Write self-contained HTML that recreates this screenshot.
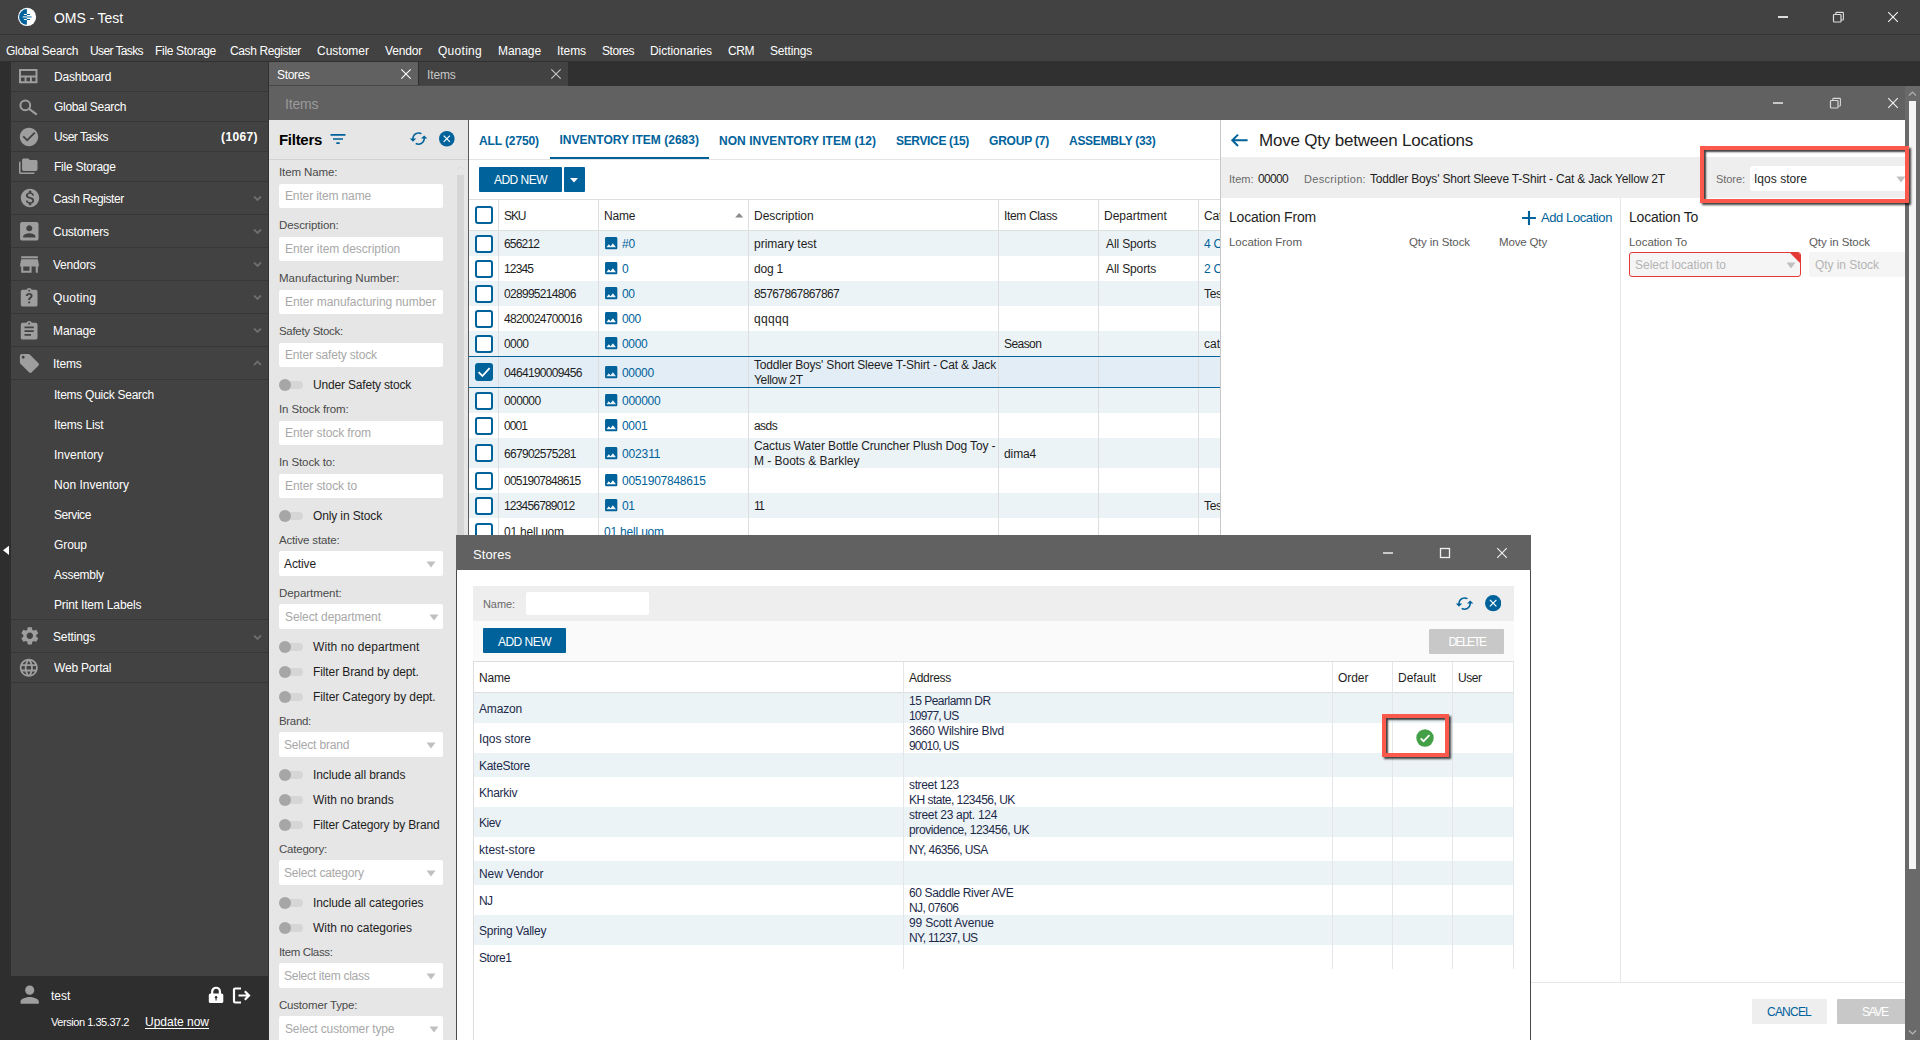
<!DOCTYPE html>
<html><head><meta charset="utf-8"><title>OMS - Test</title>
<style>
html,body{margin:0;padding:0;}
body{width:1920px;height:1040px;overflow:hidden;position:relative;background:#303030;font-family:"Liberation Sans",sans-serif;}
div,span,svg{position:absolute;box-sizing:border-box;}
span{white-space:nowrap;line-height:16px;}
.clip{overflow:hidden;}
</style></head><body>
<div style="left:0px;top:0px;width:1920px;height:34px;background:#424242;"></div>
<div style="left:0px;top:34px;width:1920px;height:1px;background:#333333;"></div>
<div style="left:0px;top:35px;width:1920px;height:26px;background:#424242;"></div>
<svg style="left:17px;top:7px;" width="20" height="20" viewBox="0 0 20 20"><circle cx="10.05" cy="9.95" r="9.1" fill="#fff"/><path d="M9.9 2.1a7.85 7.85 0 0 0 0 15.7z" fill="#00629b"/><path d="M6.9 7.5h3M6.9 12.5h3" stroke="#fff" stroke-width="1"/><path d="M9.9 7.5h3.1M9.9 12.5h3.1" stroke="#00629b" stroke-width="1"/><path d="M5.7 9.95h4.2" stroke="#c9dde9" stroke-width="1.4"/><path d="M9.9 9.95h4.7" stroke="#4f93bb" stroke-width="1.4"/></svg>
<span style="left:54.00px;top:10.45px;font-size:14px;color:#ffffff;letter-spacing:-0.076px;">OMS - Test</span>
<div style="left:1777.5px;top:16.3px;width:10px;height:1.7px;background:#dcdcdc;"></div>
<svg style="left:1831.5px;top:11px;" width="12" height="12" viewBox="0 0 12 12"><rect x="1.5" y="3.5" width="7.5" height="7.5" fill="none" stroke="#dcdcdc" stroke-width="1.2" rx="0.8"/><path d="M3.8 3.2V2.2c0-.5.3-.8.8-.8h6c.5 0 .8.3.8.8v6c0 .5-.3.8-.8.8H9.3" fill="none" stroke="#dcdcdc" stroke-width="1.1"/></svg>
<svg style="left:1886.5px;top:11px;" width="12" height="12" viewBox="0 0 12 12"><path d="M1.2 1.2l9.6 9.6M10.8 1.2l-9.6 9.6" stroke="#f0f0f0" stroke-width="1.15" fill="none"/></svg>
<span style="left:6.00px;top:42.81px;font-size:12px;color:#ffffff;letter-spacing:-0.312px;">Global Search</span>
<span style="left:90.00px;top:42.81px;font-size:12px;color:#ffffff;letter-spacing:-0.614px;">User Tasks</span>
<span style="left:155.00px;top:42.81px;font-size:12px;color:#ffffff;letter-spacing:-0.310px;">File Storage</span>
<span style="left:230.00px;top:42.81px;font-size:12px;color:#ffffff;letter-spacing:-0.389px;">Cash Register</span>
<span style="left:317.00px;top:42.81px;font-size:12px;color:#ffffff;">Customer</span>
<span style="left:385.00px;top:42.81px;font-size:12px;color:#ffffff;letter-spacing:-0.174px;">Vendor</span>
<span style="left:438.00px;top:42.81px;font-size:12px;color:#ffffff;letter-spacing:0.280px;">Quoting</span>
<span style="left:498.00px;top:42.81px;font-size:12px;color:#ffffff;letter-spacing:-0.062px;">Manage</span>
<span style="left:557.00px;top:42.81px;font-size:12px;color:#ffffff;letter-spacing:-0.069px;">Items</span>
<span style="left:602.00px;top:42.81px;font-size:12px;color:#ffffff;letter-spacing:-0.448px;">Stores</span>
<span style="left:650.00px;top:42.81px;font-size:12px;color:#ffffff;letter-spacing:-0.059px;">Dictionaries</span>
<span style="left:728.00px;top:42.81px;font-size:12px;color:#ffffff;letter-spacing:-0.444px;">CRM</span>
<span style="left:770.00px;top:42.81px;font-size:12px;color:#ffffff;letter-spacing:-0.171px;">Settings</span>
<div style="left:0px;top:62px;width:11px;height:978px;background:#2e2e2e;"></div>
<div style="left:11px;top:62px;width:257px;height:914px;background:#424242;"></div>
<div style="left:11px;top:976px;width:257px;height:64px;background:#2e2e2e;"></div>
<svg style="left:2.6px;top:544.8px;" width="6" height="10.6" viewBox="0 0 6.5 10"><path d="M6.5 0L0 5l6.5 5z" fill="#ffffff"/></svg>
<svg style="left:19.2px;top:69.4px;" width="18.5" height="14.2" viewBox="0 0 18.5 14.2"><path fill="#9e9e9e" fill-rule="evenodd" d="M0 0h18.5v14.2H0zM2 2v4.6h14.5V2zM2 8.5v3.8h3.6V8.5zm5.5 0v3.8h3.5V8.5zm5.4 0v3.8h3.6V8.5z"/></svg>
<svg style="left:18px;top:97px;" width="22" height="20" viewBox="0 0 22 20"><circle cx="7.3" cy="8.3" r="4.9" fill="none" stroke="#9e9e9e" stroke-width="2"/><path d="M10.8 11.6l8 6" stroke="#9e9e9e" stroke-width="2.1" fill="none"/></svg>
<span style="left:54.00px;top:69.31px;font-size:12px;color:#ffffff;letter-spacing:-0.166px;">Dashboard</span>
<div style="left:11px;top:91px;width:257px;height:1px;background:#373737;"></div>
<span style="left:54.00px;top:99.31px;font-size:12px;color:#ffffff;letter-spacing:-0.309px;">Global Search</span>
<div style="left:11px;top:121px;width:257px;height:1px;background:#373737;"></div>
<svg style="left:17.6px;top:125.5px;" width="22" height="22" viewBox="0 0 24 24"><path fill="#9e9e9e" d="M12 2C6.48 2 2 6.48 2 12s4.48 10 10 10 10-4.48 10-10S17.52 2 12 2zm-2 15l-5-5 1.41-1.41L10 14.17l7.59-7.59L19 8l-9 9z"/></svg>
<span style="left:54.00px;top:129.31px;font-size:12px;color:#ffffff;letter-spacing:-0.505px;">User Tasks</span>
<div style="left:11px;top:151px;width:257px;height:1px;background:#373737;"></div>
<svg style="left:19.2px;top:157.15px;" width="18.5" height="18.5" viewBox="0 0 24 24"><path fill="#9e9e9e" d="M2 6H0v14c0 1.1.9 2 2 2h18v-2H2V6zm20-2h-8l-2-2H6c-1.1 0-2 .9-2 2v12c0 1.1.9 2 2 2h16c1.1 0 2-.9 2-2V6c0-1.1-.9-2-2-2z"/></svg>
<span style="left:54.00px;top:159.31px;font-size:12px;color:#ffffff;letter-spacing:-0.253px;">File Storage</span>
<div style="left:11px;top:181px;width:257px;height:1px;background:#373737;"></div>
<svg style="left:18.5px;top:187.0px;" width="22" height="22" viewBox="0 0 24 24"><path fill="#9e9e9e" d="M12 2C6.48 2 2 6.48 2 12s4.48 10 10 10 10-4.48 10-10S17.52 2 12 2zm1.41 16.09V20h-2.67v-1.93c-1.71-.36-3.16-1.46-3.27-3.4h1.96c.1 1.05.82 1.87 2.65 1.87 1.96 0 2.4-.98 2.4-1.59 0-.83-.44-1.61-2.67-2.14-2.48-.6-4.18-1.62-4.18-3.67 0-1.72 1.39-2.84 3.11-3.21V4h2.67v1.95c1.86.45 2.79 1.86 2.85 3.39H14.3c-.05-1.11-.64-1.87-2.22-1.87-1.5 0-2.4.68-2.4 1.64 0 .84.65 1.39 2.67 1.91s4.18 1.39 4.18 3.91c-.01 1.83-1.38 2.83-3.12 3.16z"/></svg>
<span style="left:53.00px;top:190.81px;font-size:12px;color:#ffffff;letter-spacing:-0.391px;">Cash Register</span>
<div style="left:11px;top:214px;width:257px;height:1px;background:#373737;"></div>
<svg style="left:253px;top:195.0px;" width="9" height="7" viewBox="0 0 9 7"><path d="M1 1.5L4.5 5 8 1.5" stroke="#6e6e6e" stroke-width="1.8" fill="none"/></svg>
<svg style="left:17.3px;top:218.7px;" width="24.6" height="24.6" viewBox="0 0 24 24"><path fill="#9e9e9e" d="M3 5v14c0 1.1.89 2 2 2h14c1.1 0 2-.9 2-2V5c0-1.1-.9-2-2-2H5c-1.11 0-2 .9-2 2zm12 4c0 1.66-1.34 3-3 3s-3-1.34-3-3 1.34-3 3-3 3 1.34 3 3zm-9 8c0-2 4-3.1 6-3.1s6 1.1 6 3.1v1H6v-1z"/></svg>
<span style="left:53.00px;top:223.81px;font-size:12px;color:#ffffff;letter-spacing:-0.260px;">Customers</span>
<div style="left:11px;top:247px;width:257px;height:1px;background:#373737;"></div>
<svg style="left:253px;top:228.0px;" width="9" height="7" viewBox="0 0 9 7"><path d="M1 1.5L4.5 5 8 1.5" stroke="#6e6e6e" stroke-width="1.8" fill="none"/></svg>
<svg style="left:17.1px;top:251.5px;" width="25" height="25" viewBox="0 0 24 24"><path fill="#9e9e9e" d="M20 4H4v2h16V4zm1 10v-2l-1-5H4l-1 5v2h1v6h10v-6h4v6h2v-6h1zm-9 4H6v-4h6v4z"/></svg>
<span style="left:53.00px;top:256.81px;font-size:12px;color:#ffffff;letter-spacing:-0.222px;">Vendors</span>
<div style="left:11px;top:280px;width:257px;height:1px;background:#373737;"></div>
<svg style="left:253px;top:261.0px;" width="9" height="7" viewBox="0 0 9 7"><path d="M1 1.5L4.5 5 8 1.5" stroke="#6e6e6e" stroke-width="1.8" fill="none"/></svg>
<svg style="left:18.35px;top:286.78px;" width="22.3" height="22.3" viewBox="0 0 24 24"><path fill="#9e9e9e" d="M19 3h-4.18C14.4 1.84 13.3 1 12 1c-1.3 0-2.4.84-2.82 2H5c-1.1 0-2 .9-2 2v14c0 1.1.9 2 2 2h14c1.1 0 2-.9 2-2V5c0-1.1-.9-2-2-2zm-7 0c.55 0 1 .45 1 1s-.45 1-1 1-1-.45-1-1 .45-1 1-1zm1.1 14.6h-2.2v-2.1h2.2v2.1zm1.9-6.2c-.7.7-1.7 1.2-1.8 2.7h-2.3c0-1.9.8-2.7 1.6-3.3.6-.5 1-.8 1-1.400 0-.6-.5-1.1-1.300-1.100-.8 0-1.400.5-1.500 1.300H8.400c.1-2 1.600-3.200 3.700-3.200 2.200 0 3.600 1.200 3.600 2.900 0 1-.3 1.500-.7 2.100z"/></svg>
<span style="left:53.00px;top:289.81px;font-size:12px;color:#ffffff;letter-spacing:0.169px;">Quoting</span>
<div style="left:11px;top:313px;width:257px;height:1px;background:#373737;"></div>
<svg style="left:253px;top:294.0px;" width="9" height="7" viewBox="0 0 9 7"><path d="M1 1.5L4.5 5 8 1.5" stroke="#6e6e6e" stroke-width="1.8" fill="none"/></svg>
<svg style="left:18.35px;top:319.98px;" width="22.3" height="22.3" viewBox="0 0 24 24"><path fill="#9e9e9e" d="M19 3h-4.18C14.4 1.84 13.3 1 12 1c-1.3 0-2.4.84-2.82 2H5c-1.1 0-2 .9-2 2v14c0 1.1.9 2 2 2h14c1.1 0 2-.9 2-2V5c0-1.1-.9-2-2-2zm-7 0c.55 0 1 .45 1 1s-.45 1-1 1-1-.45-1-1 .45-1 1-1zm2 14H7v-2h7v2zm3-4H7v-2h10v2zm0-4H7V7h10v2z"/></svg>
<span style="left:53.00px;top:322.81px;font-size:12px;color:#ffffff;letter-spacing:-0.120px;">Manage</span>
<div style="left:11px;top:346px;width:257px;height:1px;background:#373737;"></div>
<svg style="left:253px;top:327.0px;" width="9" height="7" viewBox="0 0 9 7"><path d="M1 1.5L4.5 5 8 1.5" stroke="#6e6e6e" stroke-width="1.8" fill="none"/></svg>
<svg style="left:18.2px;top:351.6px;" width="22.8" height="22.8" viewBox="0 0 24 24"><path fill="#9e9e9e" d="M21.41 11.58l-9-9C12.05 2.22 11.55 2 11 2H4c-1.1 0-2 .9-2 2v7c0 .55.22 1.05.59 1.42l9 9c.36.36.86.58 1.41.58.55 0 1.05-.22 1.41-.59l7-7c.37-.36.59-.86.59-1.41 0-.55-.23-1.06-.59-1.42zM5.5 7C4.67 7 4 6.33 4 5.5S4.67 4 5.5 4 7 4.67 7 5.5 6.33 7 5.5 7z"/></svg>
<span style="left:53.00px;top:355.81px;font-size:12px;color:#ffffff;letter-spacing:-0.139px;">Items</span>
<div style="left:11px;top:379px;width:257px;height:1px;background:#373737;"></div>
<svg style="left:253px;top:360.0px;" width="9" height="7" viewBox="0 0 9 7"><path d="M1 5l3.5-3.5L8 5" stroke="#6e6e6e" stroke-width="1.8" fill="none"/></svg>
<span style="left:221.00px;top:129.31px;font-size:12px;color:#ffffff;font-weight:bold;letter-spacing:0.384px;">(1067)</span>
<span style="left:54.00px;top:387.31px;font-size:12px;color:#ffffff;letter-spacing:-0.264px;">Items Quick Search</span>
<span style="left:54.00px;top:417.31px;font-size:12px;color:#ffffff;letter-spacing:-0.193px;">Items List</span>
<span style="left:54.00px;top:447.31px;font-size:12px;color:#ffffff;letter-spacing:-0.005px;">Inventory</span>
<span style="left:54.00px;top:477.31px;font-size:12px;color:#ffffff;letter-spacing:0.032px;">Non Inventory</span>
<span style="left:54.00px;top:507.31px;font-size:12px;color:#ffffff;letter-spacing:-0.444px;">Service</span>
<span style="left:54.00px;top:537.31px;font-size:12px;color:#ffffff;letter-spacing:-0.085px;">Group</span>
<span style="left:54.00px;top:567.31px;font-size:12px;color:#ffffff;letter-spacing:-0.284px;">Assembly</span>
<span style="left:54.00px;top:597.31px;font-size:12px;color:#ffffff;letter-spacing:-0.165px;">Print Item Labels</span>
<div style="left:11px;top:619px;width:257px;height:1px;background:#373737;"></div>
<svg style="left:18.7px;top:625.1px;" width="21.6" height="21.6" viewBox="0 0 24 24"><path fill="#9e9e9e" d="M19.14 12.94c.04-.3.06-.61.06-.94 0-.32-.02-.64-.07-.94l2.03-1.58c.18-.14.23-.41.12-.61l-1.92-3.32c-.12-.22-.37-.29-.59-.22l-2.39.96c-.5-.38-1.03-.7-1.62-.94l-.36-2.54c-.04-.24-.24-.41-.48-.41h-3.84c-.24 0-.43.17-.47.41l-.36 2.54c-.59.24-1.13.57-1.62.94l-2.39-.96c-.22-.08-.47 0-.59.22L2.74 8.87c-.12.21-.08.47.12.61l2.03 1.58c-.05.3-.09.63-.09.94s.02.64.07.94l-2.03 1.58c-.18.14-.23.41-.12.61l1.92 3.32c.12.22.37.29.59.22l2.39-.96c.5.38 1.03.7 1.62.94l.36 2.54c.05.24.24.41.48.41h3.84c.24 0 .44-.17.47-.41l.36-2.54c.59-.24 1.13-.56 1.62-.94l2.39.96c.22.08.47 0 .59-.22l1.92-3.32c.12-.22.07-.47-.12-.61l-2.01-1.58zM12 15.6c-1.98 0-3.6-1.62-3.6-3.6s1.62-3.6 3.6-3.6 3.6 1.62 3.6 3.6-1.62 3.6-3.6 3.6z"/></svg>
<span style="left:53.00px;top:629.31px;font-size:12px;color:#ffffff;letter-spacing:-0.150px;">Settings</span>
<svg style="left:253px;top:633.5px;" width="9" height="7" viewBox="0 0 9 7"><path d="M1 1.5L4.5 5 8 1.5" stroke="#6e6e6e" stroke-width="1.8" fill="none"/></svg>
<div style="left:11px;top:652px;width:257px;height:1px;background:#373737;"></div>
<svg style="left:17.8px;top:656.8px;" width="21.6" height="21.6" viewBox="0 0 24 24"><path fill="#9e9e9e" d="M11.99 2C6.47 2 2 6.48 2 12s4.47 10 9.99 10C17.52 22 22 17.52 22 12S17.52 2 11.99 2zm6.93 6h-2.95c-.32-1.25-.78-2.45-1.38-3.56 1.84.63 3.37 1.91 4.33 3.56zM12 4.04c.83 1.2 1.48 2.53 1.91 3.96h-3.82c.43-1.43 1.08-2.76 1.91-3.96zM4.26 14C4.1 13.36 4 12.69 4 12s.1-1.36.26-2h3.38c-.08.66-.14 1.32-.14 2 0 .68.06 1.34.14 2H4.26zm.82 2h2.95c.32 1.25.78 2.45 1.38 3.56-1.84-.63-3.37-1.9-4.33-3.56zm2.95-8H5.08c.96-1.66 2.49-2.93 4.33-3.56C8.81 5.55 8.35 6.75 8.03 8zM12 19.96c-.83-1.2-1.48-2.53-1.91-3.96h3.82c-.43 1.43-1.08 2.76-1.91 3.96zM14.34 14H9.66c-.09-.66-.16-1.32-.16-2 0-.68.07-1.35.16-2h4.68c.09.65.16 1.32.16 2 0 .68-.07 1.34-.16 2zm.25 5.56c.6-1.11 1.06-2.31 1.38-3.56h2.95c-.96 1.65-2.49 2.93-4.33 3.56zM16.36 14c.08-.66.14-1.32.14-2 0-.68-.06-1.34-.14-2h3.38c.16.64.26 1.31.26 2s-.1 1.36-.26 2h-3.38z"/></svg>
<span style="left:54.00px;top:660.31px;font-size:12px;color:#ffffff;letter-spacing:-0.185px;">Web Portal</span>
<div style="left:11px;top:682px;width:257px;height:1px;background:#373737;"></div>
<svg style="left:16.3px;top:981.3px;" width="27.4" height="27.4" viewBox="0 0 24 24"><path fill="#9e9e9e" d="M12 12c2.21 0 4-1.79 4-4s-1.79-4-4-4-4 1.79-4 4 1.79 4 4 4zm0 2c-2.67 0-8 1.34-8 4v2h16v-2c0-2.66-5.33-4-8-4z"/></svg>
<span style="left:51.00px;top:988.31px;font-size:12px;color:#ffffff;letter-spacing:-0.012px;">test</span>
<svg style="left:208px;top:986px;" width="16" height="18" viewBox="0 0 16 18"><rect x="0.8" y="7.4" width="14.5" height="9.6" rx="1.6" fill="#fff"/><path d="M4.2 8V5.6a3.85 3.85 0 0 1 7.7 0V8" fill="none" stroke="#fff" stroke-width="2.2"/><circle cx="8.05" cy="11.3" r="1.2" fill="#2e2e2e"/><path d="M8.05 11.5v3" stroke="#2e2e2e" stroke-width="1.1"/></svg>
<svg style="left:232px;top:987px;" width="19" height="17" viewBox="0 0 19 17"><path d="M9 1.5H3.2c-.7 0-1.2.5-1.2 1.2v11.6c0 .7.5 1.2 1.2 1.2H9" fill="none" stroke="#fff" stroke-width="2.2"/><path d="M6.5 8.5h10M12.8 4.3l4.2 4.2-4.2 4.2" fill="none" stroke="#fff" stroke-width="2.2"/></svg>
<span style="left:51.00px;top:1014.24px;font-size:11px;color:#ffffff;letter-spacing:-0.448px;">Version 1.35.37.2</span>
<span style="left:145.00px;top:1014.11px;font-size:12px;color:#ffffff;letter-spacing:-0.006px;">Update now</span>
<div style="left:145px;top:1028px;width:64px;height:1px;background:#ffffff;"></div>
<div style="left:269px;top:62px;width:149px;height:24px;background:#616161;"></div>
<span style="left:277.00px;top:66.81px;font-size:12px;color:#ffffff;letter-spacing:-0.335px;">Stores</span>
<div style="left:419px;top:62px;width:149px;height:24px;background:#424242;"></div>
<span style="left:427.00px;top:66.81px;font-size:12px;color:#c8c8c8;letter-spacing:-0.139px;">Items</span>
<svg style="left:399.5px;top:68px;" width="12" height="12" viewBox="0 0 12 12"><path d="M1.3 1.3l9.4 9.4M10.7 1.3l-9.4 9.4" stroke="#ffffff" stroke-width="1.1" fill="none"/></svg>
<svg style="left:550px;top:68px;" width="12" height="12" viewBox="0 0 12 12"><path d="M1.3 1.3l9.4 9.4M10.7 1.3l-9.4 9.4" stroke="#c8c8c8" stroke-width="1.1" fill="none"/></svg>
<div style="left:269px;top:85px;width:299px;height:1px;background:#464646;"></div>
<div style="left:269px;top:86px;width:1636px;height:34px;background:#616161;"></div>
<span style="left:285.00px;top:96.44px;font-size:14px;color:#9a9a9a;letter-spacing:-0.161px;">Items</span>
<div style="left:1773px;top:102.3px;width:10px;height:1.7px;background:#c8c8c8;"></div>
<svg style="left:1829px;top:97px;" width="12" height="12" viewBox="0 0 12 12"><rect x="1.5" y="3.5" width="7.5" height="7.5" fill="none" stroke="#d8d8d8" stroke-width="1.2" rx="0.8"/><path d="M3.8 3.2V2.2c0-.5.3-.8.8-.8h6c.5 0 .8.3.8.8v6c0 .5-.3.8-.8.8H9.3" fill="none" stroke="#d8d8d8" stroke-width="1.1"/></svg>
<svg style="left:1886.5px;top:97px;" width="12" height="12" viewBox="0 0 12 12"><path d="M1.2 1.2l9.6 9.6M10.8 1.2l-9.6 9.6" stroke="#f0f0f0" stroke-width="1.15" fill="none"/></svg>
<div style="left:269px;top:120px;width:1636px;height:920px;background:#ffffff;"></div>
<div style="left:1905px;top:86px;width:15px;height:954px;background:#6a6a6a;"></div>
<div style="left:1909px;top:101px;width:7px;height:766px;background:#f5f5f5;"></div>
<svg style="left:1908px;top:90px;" width="9" height="7" viewBox="0 0 9 7"><path d="M1 5.5L4.5 2 8 5.5" stroke="#b0b0b0" stroke-width="1.2" fill="none"/></svg>
<svg style="left:1908px;top:1029px;" width="9" height="7" viewBox="0 0 9 7"><path d="M1 1.5L4.5 5 8 1.5" stroke="#9a9a9a" stroke-width="1.2" fill="none"/></svg>
<div style="left:269px;top:120px;width:199px;height:920px;background:#e6e6e6;"></div>
<div style="left:468px;top:120px;width:1px;height:920px;background:#5a5a5a;"></div>
<span style="left:279.00px;top:132.01px;font-size:15px;color:#000000;font-weight:bold;letter-spacing:-0.289px;">Filters</span>
<svg style="left:328px;top:129px;" width="20" height="20" viewBox="0 0 24 24"><path fill="#00629b" d="M10 18h4v-2h-4v2zM3 6v2h18V6H3zm3 7h12v-2H6v2z"/></svg>
<svg style="left:409.4px;top:129.2px;" width="19.2" height="19.2" viewBox="0 0 24 24"><path fill="#00629b" d="M19 8l-4 4h3c0 3.31-2.69 6-6 6-1.01 0-1.97-.25-2.8-.7l-1.46 1.46C8.97 19.54 10.43 20 12 20c4.42 0 8-3.58 8-8h3l-4-4zM6 12c0-3.31 2.69-6 6-6 1.01 0 1.97.25 2.8.7l1.46-1.46C15.03 4.46 13.57 4 12 4c-4.42 0-8 3.58-8 8H1l4 4 4-4H6z"/></svg>
<svg style="left:439.2px;top:131.2px;" width="15.6" height="15.6" viewBox="0 0 20 20"><circle cx="10" cy="10" r="10" fill="#00629b"/><path d="M6 6l8 8M14 6l-8 8" stroke="#fff" stroke-width="1.5" fill="none"/></svg>
<div style="left:269px;top:159px;width:199px;height:1px;background:#d2d2d2;"></div>
<svg style="left:456px;top:165px;" width="9" height="6" viewBox="0 0 9 6"><path d="M1 5L4.5 1.5 8 5" stroke="#dadada" stroke-width="1" fill="none"/></svg>
<div style="left:457px;top:175px;width:7px;height:865px;background:#d5d5d5;"></div>
<span style="left:279.00px;top:163.78px;font-size:11.5px;color:#4a4a4a;letter-spacing:-0.116px;">Item Name:</span>
<div style="left:279px;top:184.0px;width:164px;height:23.5px;background:#ffffff;border-radius:2px;"></div>
<span style="left:285.00px;top:188.31px;font-size:12px;color:#a8a8a8;letter-spacing:-0.131px;">Enter item name</span>
<span style="left:279.00px;top:216.78px;font-size:11.5px;color:#4a4a4a;letter-spacing:-0.091px;">Description:</span>
<div style="left:279px;top:237.0px;width:164px;height:23.5px;background:#ffffff;border-radius:2px;"></div>
<span style="left:285.00px;top:241.31px;font-size:12px;color:#a8a8a8;letter-spacing:-0.040px;">Enter item description</span>
<span style="left:279.00px;top:269.78px;font-size:11.5px;color:#4a4a4a;letter-spacing:0.017px;">Manufacturing Number:</span>
<div style="left:279px;top:290.0px;width:164px;height:23.5px;background:#ffffff;border-radius:2px;"></div>
<span style="left:285.00px;top:294.31px;font-size:12px;color:#a8a8a8;letter-spacing:-0.048px;">Enter manufacturing number</span>
<span style="left:279.00px;top:322.78px;font-size:11.5px;color:#4a4a4a;letter-spacing:-0.306px;">Safety Stock:</span>
<div style="left:279px;top:343.0px;width:164px;height:23.5px;background:#ffffff;border-radius:2px;"></div>
<span style="left:285.00px;top:347.31px;font-size:12px;color:#a8a8a8;letter-spacing:-0.201px;">Enter safety stock</span>
<div style="left:281px;top:380.5px;width:22px;height:8px;background:#d6d6d6;border-radius:4px;"></div>
<div style="left:279px;top:378.5px;width:12px;height:12px;background:#a6a6a6;border-radius:6px;"></div>
<span style="left:313.00px;top:377.31px;font-size:12px;color:#1e1e1e;letter-spacing:-0.180px;">Under Safety stock</span>
<span style="left:279.00px;top:400.78px;font-size:11.5px;color:#4a4a4a;letter-spacing:-0.092px;">In Stock from:</span>
<div style="left:279px;top:421.0px;width:164px;height:23.5px;background:#ffffff;border-radius:2px;"></div>
<span style="left:285.00px;top:425.31px;font-size:12px;color:#a8a8a8;letter-spacing:-0.084px;">Enter stock from</span>
<span style="left:279.00px;top:453.78px;font-size:11.5px;color:#4a4a4a;letter-spacing:-0.111px;">In Stock to:</span>
<div style="left:279px;top:474.0px;width:164px;height:23.5px;background:#ffffff;border-radius:2px;"></div>
<span style="left:285.00px;top:478.31px;font-size:12px;color:#a8a8a8;letter-spacing:-0.098px;">Enter stock to</span>
<div style="left:281px;top:511.5px;width:22px;height:8px;background:#d6d6d6;border-radius:4px;"></div>
<div style="left:279px;top:509.5px;width:12px;height:12px;background:#a6a6a6;border-radius:6px;"></div>
<span style="left:313.00px;top:508.31px;font-size:12px;color:#1e1e1e;letter-spacing:-0.128px;">Only in Stock</span>
<span style="left:279.00px;top:531.78px;font-size:11.5px;color:#4a4a4a;letter-spacing:-0.164px;">Active state:</span>
<div style="left:279px;top:551.0px;width:164px;height:25px;background:#ffffff;border-radius:2px;"></div>
<span style="left:284.00px;top:556.31px;font-size:12px;color:#1e1e1e;letter-spacing:-0.121px;">Active</span>
<svg style="left:425.5px;top:561.0px;" width="10" height="7" viewBox="0 0 10 7"><path d="M0.5 0.5h9L5 6.5z" fill="#c0c0c0"/></svg>
<span style="left:279.00px;top:584.78px;font-size:11.5px;color:#4a4a4a;letter-spacing:-0.049px;">Department:</span>
<div style="left:279px;top:604.0px;width:164px;height:25px;background:#ffffff;border-radius:2px;"></div>
<span style="left:285.00px;top:609.31px;font-size:12px;color:#a8a8a8;letter-spacing:-0.088px;">Select department</span>
<svg style="left:428.5px;top:614.0px;" width="10" height="7" viewBox="0 0 10 7"><path d="M0.5 0.5h9L5 6.5z" fill="#c0c0c0"/></svg>
<div style="left:281px;top:642.5px;width:22px;height:8px;background:#d6d6d6;border-radius:4px;"></div>
<div style="left:279px;top:640.5px;width:12px;height:12px;background:#a6a6a6;border-radius:6px;"></div>
<span style="left:313.00px;top:639.31px;font-size:12px;color:#1e1e1e;letter-spacing:0.094px;">With no department</span>
<div style="left:281px;top:667.5px;width:22px;height:8px;background:#d6d6d6;border-radius:4px;"></div>
<div style="left:279px;top:665.5px;width:12px;height:12px;background:#a6a6a6;border-radius:6px;"></div>
<span style="left:313.00px;top:664.31px;font-size:12px;color:#1e1e1e;letter-spacing:-0.107px;">Filter Brand by dept.</span>
<div style="left:281px;top:692.5px;width:22px;height:8px;background:#d6d6d6;border-radius:4px;"></div>
<div style="left:279px;top:690.5px;width:12px;height:12px;background:#a6a6a6;border-radius:6px;"></div>
<span style="left:313.00px;top:689.31px;font-size:12px;color:#1e1e1e;letter-spacing:-0.090px;">Filter Category by dept.</span>
<span style="left:279.00px;top:712.78px;font-size:11.5px;color:#4a4a4a;letter-spacing:-0.338px;">Brand:</span>
<div style="left:279px;top:732.0px;width:164px;height:25px;background:#ffffff;border-radius:2px;"></div>
<span style="left:284.00px;top:737.31px;font-size:12px;color:#a8a8a8;letter-spacing:-0.181px;">Select brand</span>
<svg style="left:425.5px;top:742.0px;" width="10" height="7" viewBox="0 0 10 7"><path d="M0.5 0.5h9L5 6.5z" fill="#c0c0c0"/></svg>
<div style="left:281px;top:770.5px;width:22px;height:8px;background:#d6d6d6;border-radius:4px;"></div>
<div style="left:279px;top:768.5px;width:12px;height:12px;background:#a6a6a6;border-radius:6px;"></div>
<span style="left:313.00px;top:767.31px;font-size:12px;color:#1e1e1e;letter-spacing:-0.098px;">Include all brands</span>
<div style="left:281px;top:795.5px;width:22px;height:8px;background:#d6d6d6;border-radius:4px;"></div>
<div style="left:279px;top:793.5px;width:12px;height:12px;background:#a6a6a6;border-radius:6px;"></div>
<span style="left:313.00px;top:792.31px;font-size:12px;color:#1e1e1e;">With no brands</span>
<div style="left:281px;top:820.5px;width:22px;height:8px;background:#d6d6d6;border-radius:4px;"></div>
<div style="left:279px;top:818.5px;width:12px;height:12px;background:#a6a6a6;border-radius:6px;"></div>
<span style="left:313.00px;top:817.31px;font-size:12px;color:#1e1e1e;letter-spacing:-0.150px;">Filter Category by Brand</span>
<span style="left:279.00px;top:840.78px;font-size:11.5px;color:#4a4a4a;letter-spacing:-0.213px;">Category:</span>
<div style="left:279px;top:860.0px;width:164px;height:25px;background:#ffffff;border-radius:2px;"></div>
<span style="left:284.00px;top:865.31px;font-size:12px;color:#a8a8a8;letter-spacing:-0.185px;">Select category</span>
<svg style="left:425.5px;top:870.0px;" width="10" height="7" viewBox="0 0 10 7"><path d="M0.5 0.5h9L5 6.5z" fill="#c0c0c0"/></svg>
<div style="left:281px;top:898.5px;width:22px;height:8px;background:#d6d6d6;border-radius:4px;"></div>
<div style="left:279px;top:896.5px;width:12px;height:12px;background:#a6a6a6;border-radius:6px;"></div>
<span style="left:313.00px;top:895.31px;font-size:12px;color:#1e1e1e;letter-spacing:-0.107px;">Include all categories</span>
<div style="left:281px;top:923.5px;width:22px;height:8px;background:#d6d6d6;border-radius:4px;"></div>
<div style="left:279px;top:921.5px;width:12px;height:12px;background:#a6a6a6;border-radius:6px;"></div>
<span style="left:313.00px;top:920.31px;font-size:12px;color:#1e1e1e;letter-spacing:-0.029px;">With no categories</span>
<span style="left:279.00px;top:943.78px;font-size:11.5px;color:#4a4a4a;letter-spacing:-0.367px;">Item Class:</span>
<div style="left:279px;top:963.0px;width:164px;height:25px;background:#ffffff;border-radius:2px;"></div>
<span style="left:284.00px;top:968.31px;font-size:12px;color:#a8a8a8;letter-spacing:-0.271px;">Select item class</span>
<svg style="left:425.5px;top:973.0px;" width="10" height="7" viewBox="0 0 10 7"><path d="M0.5 0.5h9L5 6.5z" fill="#c0c0c0"/></svg>
<span style="left:279.00px;top:996.78px;font-size:11.5px;color:#4a4a4a;letter-spacing:-0.195px;">Customer Type:</span>
<div style="left:279px;top:1016.0px;width:164px;height:25px;background:#ffffff;border-radius:2px;"></div>
<span style="left:285.00px;top:1021.31px;font-size:12px;color:#a8a8a8;letter-spacing:-0.136px;">Select customer type</span>
<svg style="left:428.5px;top:1026.0px;" width="10" height="7" viewBox="0 0 10 7"><path d="M0.5 0.5h9L5 6.5z" fill="#c0c0c0"/></svg>
<span style="left:479.00px;top:133.31px;font-size:12px;color:#00629b;font-weight:bold;letter-spacing:-0.115px;">ALL (2750)</span>
<span style="left:559.50px;top:132.31px;font-size:12px;color:#00629b;font-weight:bold;letter-spacing:0.015px;">INVENTORY ITEM (2683)</span>
<span style="left:719.00px;top:133.31px;font-size:12px;color:#00629b;font-weight:bold;letter-spacing:0.051px;">NON INVENTORY ITEM (12)</span>
<span style="left:896.00px;top:133.31px;font-size:12px;color:#00629b;font-weight:bold;letter-spacing:-0.346px;">SERVICE (15)</span>
<span style="left:989.00px;top:133.31px;font-size:12px;color:#00629b;font-weight:bold;letter-spacing:-0.200px;">GROUP (7)</span>
<span style="left:1069.00px;top:133.31px;font-size:12px;color:#00629b;font-weight:bold;letter-spacing:-0.273px;">ASSEMBLY (33)</span>
<div style="left:469px;top:159px;width:751px;height:1px;background:#e4e4e4;"></div>
<div style="left:549.5px;top:157px;width:159.5px;height:2px;background:#00629b;"></div>
<div style="left:479px;top:167px;width:82.5px;height:25px;background:#00629b;border-radius:1px;"></div>
<span style="left:494.00px;top:171.81px;font-size:12px;color:#ffffff;letter-spacing:-0.525px;">ADD NEW</span>
<div style="left:563.5px;top:167px;width:21.5px;height:25px;background:#00629b;border-radius:1px;"></div>
<svg style="left:570px;top:178px;" width="8" height="5" viewBox="0 0 8 5"><path d="M0 0h8L4 4.5z" fill="#fff"/></svg>
<div style="left:469px;top:199px;width:751px;height:1px;background:#dedede;"></div>
<div style="left:469px;top:230px;width:751px;height:1px;background:#dedede;"></div>
<div class="clip" style="left:469px;top:200px;width:751px;height:340px;">
<div style="left:0px;top:31px;width:751px;height:25px;background:#ecf3f7;"></div>
<div style="left:0px;top:81px;width:751px;height:25px;background:#ecf3f7;"></div>
<div style="left:0px;top:131px;width:751px;height:25px;background:#ecf3f7;"></div>
<div style="left:0px;top:156px;width:751px;height:32px;background:#e3edf5;"></div>
<div style="left:0px;top:188px;width:751px;height:25px;background:#ecf3f7;"></div>
<div style="left:0px;top:238px;width:751px;height:30px;background:#ecf3f7;"></div>
<div style="left:0px;top:293px;width:751px;height:25px;background:#ecf3f7;"></div>
<div style="left:29px;top:0px;width:1px;height:340px;background:#dedede;"></div>
<div style="left:129px;top:0px;width:1px;height:340px;background:#dedede;"></div>
<div style="left:279px;top:0px;width:1px;height:340px;background:#dedede;"></div>
<div style="left:529px;top:0px;width:1px;height:340px;background:#dedede;"></div>
<div style="left:629px;top:0px;width:1px;height:340px;background:#dedede;"></div>
<div style="left:729px;top:0px;width:1px;height:340px;background:#dedede;"></div>
<div style="left:0px;top:156px;width:751px;height:1px;background:#00629b;"></div>
<div style="left:0px;top:187px;width:751px;height:1px;background:#00629b;"></div>
</div>
<span style="left:504.00px;top:208.31px;font-size:12px;color:#1e1e1e;letter-spacing:-1.102px;">SKU</span>
<span style="left:604.00px;top:208.31px;font-size:12px;color:#1e1e1e;letter-spacing:-0.164px;">Name</span>
<span style="left:754.00px;top:208.31px;font-size:12px;color:#1e1e1e;letter-spacing:-0.037px;">Description</span>
<span style="left:1004.00px;top:208.31px;font-size:12px;color:#1e1e1e;letter-spacing:-0.348px;">Item Class</span>
<span style="left:1104.00px;top:208.31px;font-size:12px;color:#1e1e1e;letter-spacing:0.017px;">Department</span>
<svg style="left:734.8px;top:212.7px;" width="8.3" height="5" viewBox="0 0 8 5"><path d="M0 4.5h8L4 0z" fill="#8a8a8a"/></svg>
<div style="left:475px;top:206px;width:18px;height:18px;background:#ffffff;border:2px solid #00629b;border-radius:3px;"></div>
<div class="clip" style="left:469px;top:200px;width:751px;height:335px;">
<div style="left:-469px;top:-200px;width:1920px;height:1040px;">
<span style="left:1204.00px;top:208.31px;font-size:12px;color:#1e1e1e;letter-spacing:-0.150px;">Category</span>
<div style="left:475px;top:235px;width:18px;height:18px;background:#ffffff;border:2px solid #00629b;border-radius:3px;"></div>
<span style="left:504.00px;top:236.31px;font-size:12px;color:#1e1e1e;letter-spacing:-0.815px;">656212</span>
<svg style="left:602.85px;top:235.2px;" width="16.4" height="16.4" viewBox="0 0 24 24"><path fill="#00629b" d="M21 19V5c0-1.1-.9-2-2-2H5c-1.1 0-2 .9-2 2v14c0 1.1.9 2 2 2h14c1.1 0 2-.9 2-2zM8.5 13.5l2.5 3.01L14.5 12l4.5 6H5l3.5-4.5z"/></svg>
<span style="left:622.00px;top:236.31px;font-size:12px;color:#00629b;letter-spacing:-0.125px;">#0</span>
<span style="left:754.00px;top:236.31px;font-size:12px;color:#1e1e1e;">primary test</span>
<span style="left:1106.00px;top:236.31px;font-size:12px;color:#1e1e1e;letter-spacing:-0.124px;">All Sports</span>
<span style="left:1204.00px;top:236.31px;font-size:12px;color:#00629b;letter-spacing:-0.193px;">4 Category</span>
<div style="left:475px;top:260px;width:18px;height:18px;background:#ffffff;border:2px solid #00629b;border-radius:3px;"></div>
<span style="left:504.00px;top:261.31px;font-size:12px;color:#1e1e1e;letter-spacing:-0.859px;">12345</span>
<svg style="left:602.85px;top:260.2px;" width="16.4" height="16.4" viewBox="0 0 24 24"><path fill="#00629b" d="M21 19V5c0-1.1-.9-2-2-2H5c-1.1 0-2 .9-2 2v14c0 1.1.9 2 2 2h14c1.1 0 2-.9 2-2zM8.5 13.5l2.5 3.01L14.5 12l4.5 6H5l3.5-4.5z"/></svg>
<span style="left:622.00px;top:261.31px;font-size:12px;color:#00629b;letter-spacing:-0.706px;">0</span>
<span style="left:754.00px;top:261.31px;font-size:12px;color:#1e1e1e;letter-spacing:-0.218px;">dog 1</span>
<span style="left:1106.00px;top:261.31px;font-size:12px;color:#1e1e1e;letter-spacing:-0.124px;">All Sports</span>
<span style="left:1204.00px;top:261.31px;font-size:12px;color:#00629b;letter-spacing:-0.193px;">2 Category</span>
<div style="left:475px;top:285px;width:18px;height:18px;background:#ffffff;border:2px solid #00629b;border-radius:3px;"></div>
<span style="left:504.00px;top:286.31px;font-size:12px;color:#1e1e1e;letter-spacing:-0.704px;">028995214806</span>
<svg style="left:602.85px;top:285.2px;" width="16.4" height="16.4" viewBox="0 0 24 24"><path fill="#00629b" d="M21 19V5c0-1.1-.9-2-2-2H5c-1.1 0-2 .9-2 2v14c0 1.1.9 2 2 2h14c1.1 0 2-.9 2-2zM8.5 13.5l2.5 3.01L14.5 12l4.5 6H5l3.5-4.5z"/></svg>
<span style="left:622.00px;top:286.31px;font-size:12px;color:#00629b;letter-spacing:-0.456px;">00</span>
<span style="left:754.00px;top:286.31px;font-size:12px;color:#1e1e1e;letter-spacing:-0.593px;">85767867867867</span>
<span style="left:1204.00px;top:286.31px;font-size:12px;color:#1e1e1e;letter-spacing:-0.367px;">Test</span>
<div style="left:475px;top:310px;width:18px;height:18px;background:#ffffff;border:2px solid #00629b;border-radius:3px;"></div>
<span style="left:504.00px;top:311.31px;font-size:12px;color:#1e1e1e;letter-spacing:-0.696px;">4820024700016</span>
<svg style="left:602.85px;top:310.2px;" width="16.4" height="16.4" viewBox="0 0 24 24"><path fill="#00629b" d="M21 19V5c0-1.1-.9-2-2-2H5c-1.1 0-2 .9-2 2v14c0 1.1.9 2 2 2h14c1.1 0 2-.9 2-2zM8.5 13.5l2.5 3.01L14.5 12l4.5 6H5l3.5-4.5z"/></svg>
<span style="left:622.00px;top:311.31px;font-size:12px;color:#00629b;letter-spacing:-0.372px;">000</span>
<span style="left:754.00px;top:311.31px;font-size:12px;color:#1e1e1e;letter-spacing:0.308px;">qqqqq</span>
<div style="left:475px;top:335px;width:18px;height:18px;background:#ffffff;border:2px solid #00629b;border-radius:3px;"></div>
<span style="left:504.00px;top:336.31px;font-size:12px;color:#1e1e1e;letter-spacing:-0.593px;">0000</span>
<svg style="left:602.85px;top:335.2px;" width="16.4" height="16.4" viewBox="0 0 24 24"><path fill="#00629b" d="M21 19V5c0-1.1-.9-2-2-2H5c-1.1 0-2 .9-2 2v14c0 1.1.9 2 2 2h14c1.1 0 2-.9 2-2zM8.5 13.5l2.5 3.01L14.5 12l4.5 6H5l3.5-4.5z"/></svg>
<span style="left:622.00px;top:336.31px;font-size:12px;color:#00629b;letter-spacing:-0.331px;">0000</span>
<span style="left:1004.00px;top:336.31px;font-size:12px;color:#1e1e1e;letter-spacing:-0.572px;">Season</span>
<span style="left:1204.00px;top:336.31px;font-size:12px;color:#1e1e1e;letter-spacing:0.059px;">catt</span>
<div style="left:475px;top:363px;width:18px;height:18px;background:#00629b;border-radius:3px;"></div>
<svg style="left:475px;top:363px;" width="18" height="18" viewBox="0 0 18 18"><path d="M3.6 9.2l3.8 3.8 7.2-7.8" stroke="#fff" stroke-width="1.8" fill="none"/></svg>
<span style="left:504.00px;top:364.81px;font-size:12px;color:#1e1e1e;letter-spacing:-0.696px;">0464190009456</span>
<svg style="left:602.85px;top:363.7px;" width="16.4" height="16.4" viewBox="0 0 24 24"><path fill="#00629b" d="M21 19V5c0-1.1-.9-2-2-2H5c-1.1 0-2 .9-2 2v14c0 1.1.9 2 2 2h14c1.1 0 2-.9 2-2zM8.5 13.5l2.5 3.01L14.5 12l4.5 6H5l3.5-4.5z"/></svg>
<span style="left:622.00px;top:364.81px;font-size:12px;color:#00629b;letter-spacing:-0.306px;">00000</span>
<span style="left:754.00px;top:357.31px;font-size:12px;color:#1e1e1e;letter-spacing:-0.189px;">Toddler Boys&#x27; Short Sleeve T-Shirt - Cat &amp; Jack</span>
<span style="left:754.00px;top:372.31px;font-size:12px;color:#1e1e1e;letter-spacing:-0.323px;">Yellow 2T</span>
<div style="left:475px;top:392px;width:18px;height:18px;background:#ffffff;border:2px solid #00629b;border-radius:3px;"></div>
<span style="left:504.00px;top:393.31px;font-size:12px;color:#1e1e1e;letter-spacing:-0.593px;">000000</span>
<svg style="left:602.85px;top:392.2px;" width="16.4" height="16.4" viewBox="0 0 24 24"><path fill="#00629b" d="M21 19V5c0-1.1-.9-2-2-2H5c-1.1 0-2 .9-2 2v14c0 1.1.9 2 2 2h14c1.1 0 2-.9 2-2zM8.5 13.5l2.5 3.01L14.5 12l4.5 6H5l3.5-4.5z"/></svg>
<span style="left:622.00px;top:393.31px;font-size:12px;color:#00629b;letter-spacing:-0.289px;">000000</span>
<div style="left:475px;top:417px;width:18px;height:18px;background:#ffffff;border:2px solid #00629b;border-radius:3px;"></div>
<span style="left:504.00px;top:418.31px;font-size:12px;color:#1e1e1e;letter-spacing:-0.926px;">0001</span>
<svg style="left:602.85px;top:417.2px;" width="16.4" height="16.4" viewBox="0 0 24 24"><path fill="#00629b" d="M21 19V5c0-1.1-.9-2-2-2H5c-1.1 0-2 .9-2 2v14c0 1.1.9 2 2 2h14c1.1 0 2-.9 2-2zM8.5 13.5l2.5 3.01L14.5 12l4.5 6H5l3.5-4.5z"/></svg>
<span style="left:622.00px;top:418.31px;font-size:12px;color:#00629b;letter-spacing:-0.331px;">0001</span>
<span style="left:754.00px;top:418.31px;font-size:12px;color:#1e1e1e;letter-spacing:-0.563px;">asds</span>
<div style="left:475px;top:444px;width:18px;height:18px;background:#ffffff;border:2px solid #00629b;border-radius:3px;"></div>
<span style="left:504.00px;top:445.81px;font-size:12px;color:#1e1e1e;letter-spacing:-0.704px;">667902575281</span>
<svg style="left:602.85px;top:444.7px;" width="16.4" height="16.4" viewBox="0 0 24 24"><path fill="#00629b" d="M21 19V5c0-1.1-.9-2-2-2H5c-1.1 0-2 .9-2 2v14c0 1.1.9 2 2 2h14c1.1 0 2-.9 2-2zM8.5 13.5l2.5 3.01L14.5 12l4.5 6H5l3.5-4.5z"/></svg>
<span style="left:622.00px;top:445.81px;font-size:12px;color:#00629b;letter-spacing:-0.141px;">002311</span>
<span style="left:754.00px;top:438.31px;font-size:12px;color:#1e1e1e;letter-spacing:-0.121px;">Cactus Water Bottle Cruncher Plush Dog Toy -</span>
<span style="left:754.00px;top:453.31px;font-size:12px;color:#1e1e1e;letter-spacing:-0.033px;">M - Boots &amp; Barkley</span>
<span style="left:1004.00px;top:445.81px;font-size:12px;color:#1e1e1e;letter-spacing:-0.098px;">dima4</span>
<div style="left:475px;top:472px;width:18px;height:18px;background:#ffffff;border:2px solid #00629b;border-radius:3px;"></div>
<span style="left:504.00px;top:473.31px;font-size:12px;color:#1e1e1e;letter-spacing:-0.798px;">0051907848615</span>
<svg style="left:602.85px;top:472.2px;" width="16.4" height="16.4" viewBox="0 0 24 24"><path fill="#00629b" d="M21 19V5c0-1.1-.9-2-2-2H5c-1.1 0-2 .9-2 2v14c0 1.1.9 2 2 2h14c1.1 0 2-.9 2-2zM8.5 13.5l2.5 3.01L14.5 12l4.5 6H5l3.5-4.5z"/></svg>
<span style="left:622.00px;top:473.31px;font-size:12px;color:#00629b;letter-spacing:-0.244px;">0051907848615</span>
<div style="left:475px;top:497px;width:18px;height:18px;background:#ffffff;border:2px solid #00629b;border-radius:3px;"></div>
<span style="left:504.00px;top:498.31px;font-size:12px;color:#1e1e1e;letter-spacing:-0.815px;">123456789012</span>
<svg style="left:602.85px;top:497.2px;" width="16.4" height="16.4" viewBox="0 0 24 24"><path fill="#00629b" d="M21 19V5c0-1.1-.9-2-2-2H5c-1.1 0-2 .9-2 2v14c0 1.1.9 2 2 2h14c1.1 0 2-.9 2-2zM8.5 13.5l2.5 3.01L14.5 12l4.5 6H5l3.5-4.5z"/></svg>
<span style="left:622.00px;top:498.31px;font-size:12px;color:#00629b;letter-spacing:-0.456px;">01</span>
<span style="left:754.00px;top:498.31px;font-size:12px;color:#1e1e1e;letter-spacing:-1.478px;">11</span>
<span style="left:1204.00px;top:498.31px;font-size:12px;color:#1e1e1e;letter-spacing:-0.367px;">Test</span>
<div style="left:475px;top:523px;width:18px;height:18px;background:#ffffff;border:2px solid #00629b;border-radius:3px;"></div>
<span style="left:504.00px;top:524.31px;font-size:12px;color:#1e1e1e;letter-spacing:-0.195px;">01 hell uom</span>
<span style="left:604.00px;top:524.31px;font-size:12px;color:#00629b;letter-spacing:-0.195px;">01 hell uom</span>
</div></div>
<div style="left:1220px;top:120px;width:1px;height:920px;background:#c8c8c8;"></div>
<div style="left:1221px;top:120px;width:684px;height:920px;background:#ffffff;"></div>
<svg style="left:1230px;top:132px;" width="20" height="16" viewBox="0 0 20 16"><path d="M17.6 8.3H2.6M8 2.6L2.3 8.3 8 14" fill="none" stroke="#00629b" stroke-width="2"/></svg>
<span style="left:1259.00px;top:132.65px;font-size:17px;color:#1e1e1e;letter-spacing:-0.200px;">Move Qty between Locations</span>
<div style="left:1221px;top:157px;width:684px;height:41px;background:#eeeeee;"></div>
<span style="left:1229.00px;top:170.74px;font-size:11px;color:#6a6a6a;letter-spacing:0.011px;">Item:</span>
<span style="left:1258.00px;top:170.81px;font-size:12px;color:#1e1e1e;letter-spacing:-0.676px;">00000</span>
<span style="left:1304.00px;top:170.74px;font-size:11px;color:#6a6a6a;letter-spacing:0.327px;">Description:</span>
<span style="left:1370.00px;top:170.81px;font-size:12px;color:#1e1e1e;letter-spacing:-0.186px;">Toddler Boys&#x27; Short Sleeve T-Shirt - Cat &amp; Jack Yellow 2T</span>
<span style="left:1716.00px;top:170.74px;font-size:11px;color:#6a6a6a;letter-spacing:-0.057px;">Store:</span>
<div style="left:1750px;top:166px;width:160px;height:25px;background:#ffffff;border-radius:3px;"></div>
<span style="left:1754.00px;top:170.81px;font-size:12px;color:#1e1e1e;letter-spacing:0.029px;">Iqos store</span>
<svg style="left:1896px;top:176px;" width="10" height="7" viewBox="0 0 10 7"><path d="M0.5 0.5h9L5 6.5z" fill="#c0c0c0"/></svg>
<span style="left:1229.00px;top:209.44px;font-size:14px;color:#1e1e1e;letter-spacing:-0.191px;">Location From</span>
<svg style="left:1521px;top:210px;" width="16" height="16" viewBox="0 0 16 16"><path d="M8 1.1v13.8M1.1 8h13.8" fill="none" stroke="#00629b" stroke-width="2.1"/></svg>
<span style="left:1541.00px;top:210.38px;font-size:13px;color:#00629b;letter-spacing:-0.408px;">Add Location</span>
<span style="left:1229.00px;top:233.78px;font-size:11.5px;color:#5a5a5a;letter-spacing:-0.038px;">Location From</span>
<span style="left:1409.00px;top:233.78px;font-size:11.5px;color:#5a5a5a;letter-spacing:-0.083px;">Qty in Stock</span>
<span style="left:1499.00px;top:233.78px;font-size:11.5px;color:#5a5a5a;letter-spacing:-0.150px;">Move Qty</span>
<div style="left:1620px;top:198px;width:1px;height:785px;background:#e6e6e6;"></div>
<div style="left:1221px;top:982px;width:684px;height:1px;background:#e6e6e6;"></div>
<span style="left:1629.00px;top:209.44px;font-size:14px;color:#1e1e1e;letter-spacing:-0.213px;">Location To</span>
<span style="left:1629.00px;top:233.78px;font-size:11.5px;color:#5a5a5a;letter-spacing:-0.055px;">Location To</span>
<span style="left:1809.00px;top:233.78px;font-size:11.5px;color:#5a5a5a;letter-spacing:-0.083px;">Qty in Stock</span>
<div class="clip" style="left:1629px;top:252px;width:172px;height:25px;background:#f5f5f5;border:1px solid #e53935;border-radius:3px;"><div style="right:-7px;top:-7px;width:14px;height:14px;background:#e53935;transform:rotate(45deg);"></div></div>
<span style="left:1635.00px;top:256.81px;font-size:12px;color:#b4b4b4;letter-spacing:-0.023px;">Select location to</span>
<svg style="left:1786px;top:262px;" width="10" height="7" viewBox="0 0 10 7"><path d="M0.5 0.5h9L5 6.5z" fill="#c0c0c0"/></svg>
<div style="left:1809px;top:252px;width:100px;height:25px;background:#f5f5f5;border-radius:3px;"></div>
<span style="left:1815.00px;top:256.81px;font-size:12px;color:#b4b4b4;letter-spacing:-0.059px;">Qty in Stock</span>
<div style="left:1752px;top:999px;width:75px;height:25px;background:#eeeeee;border-radius:1px;"></div>
<span style="left:1767.00px;top:1003.81px;font-size:12px;color:#00629b;letter-spacing:-0.781px;">CANCEL</span>
<div style="left:1837px;top:999px;width:72px;height:25px;background:#c8c8c8;border-radius:1px;"></div>
<span style="left:1862.00px;top:1003.81px;font-size:12px;color:#ffffff;letter-spacing:-1.406px;">SAVE</span>
<div style="left:1905px;top:120px;width:15px;height:920px;background:#6a6a6a;"></div>
<div style="left:1909px;top:101px;width:7px;height:767.5px;background:#f5f5f5;"></div>
<svg style="left:1908px;top:1029px;" width="9" height="7" viewBox="0 0 9 7"><path d="M1 1.5L4.5 5 8 1.5" stroke="#b8b8b8" stroke-width="1.2" fill="none"/></svg>
<div style="left:456px;top:535px;width:1075px;height:505px;background:#ffffff;border:1px solid #4a4a4a;border-top:none;border-bottom:none;"></div>
<div style="left:456px;top:535px;width:1075px;height:35px;background:#616161;"></div>
<span style="left:473.00px;top:546.88px;font-size:13px;color:#ffffff;letter-spacing:0.071px;">Stores</span>
<div style="left:1383px;top:552.3px;width:10px;height:1.7px;background:#c8c8c8;"></div>
<svg style="left:1439px;top:547px;" width="12" height="12" viewBox="0 0 12 12"><rect x="1.5" y="1.5" width="9" height="9" fill="none" stroke="#f0f0f0" stroke-width="1.3"/></svg>
<svg style="left:1496px;top:547px;" width="12" height="12" viewBox="0 0 12 12"><path d="M1.2 1.2l9.6 9.6M10.8 1.2l-9.6 9.6" stroke="#f0f0f0" stroke-width="1.15" fill="none"/></svg>
<div style="left:473px;top:586px;width:1041px;height:35px;background:#eeeeee;"></div>
<span style="left:483.00px;top:595.74px;font-size:11px;color:#6a6a6a;letter-spacing:-0.080px;">Name:</span>
<div style="left:526px;top:592px;width:123px;height:23px;background:#ffffff;border-radius:2px;"></div>
<svg style="left:1455.4px;top:593.9px;" width="19.2" height="19.2" viewBox="0 0 24 24"><path fill="#00629b" d="M19 8l-4 4h3c0 3.31-2.69 6-6 6-1.01 0-1.97-.25-2.8-.7l-1.46 1.46C8.97 19.54 10.43 20 12 20c4.42 0 8-3.58 8-8h3l-4-4zM6 12c0-3.31 2.69-6 6-6 1.01 0 1.97.25 2.8.7l1.46-1.46C15.03 4.46 13.57 4 12 4c-4.42 0-8 3.58-8 8H1l4 4 4-4H6z"/></svg>
<svg style="left:1484.85px;top:595.35px;" width="16.3" height="16.3" viewBox="0 0 20 20"><circle cx="10" cy="10" r="10" fill="#00629b"/><path d="M6 6l8 8M14 6l-8 8" stroke="#fff" stroke-width="1.5" fill="none"/></svg>
<div style="left:473px;top:621px;width:1041px;height:40px;background:#fafafa;"></div>
<div style="left:483px;top:628px;width:83px;height:25px;background:#00629b;border-radius:1px;"></div>
<span style="left:498.00px;top:633.81px;font-size:12px;color:#ffffff;letter-spacing:-0.525px;">ADD NEW</span>
<div style="left:1429px;top:628.5px;width:75px;height:25px;background:#c8c8c8;border-radius:1px;"></div>
<span style="left:1448.50px;top:633.81px;font-size:12px;color:#ffffff;letter-spacing:-1.615px;">DELETE</span>
<div style="left:473px;top:661px;width:1041px;height:1px;background:#dedede;"></div>
<div style="left:473px;top:692px;width:1041px;height:1px;background:#dedede;"></div>
<div style="left:473px;top:661px;width:1px;height:379px;background:#dedede;"></div>
<div style="left:1513px;top:661px;width:1px;height:32px;background:#dedede;"></div>
<div style="left:474px;top:693px;width:1039px;height:30px;background:#ecf3f7;"></div>
<div style="left:474px;top:753px;width:1039px;height:24px;background:#ecf3f7;"></div>
<div style="left:474px;top:807px;width:1039px;height:30px;background:#ecf3f7;"></div>
<div style="left:474px;top:861px;width:1039px;height:24px;background:#ecf3f7;"></div>
<div style="left:474px;top:915px;width:1039px;height:30px;background:#ecf3f7;"></div>
<div style="left:903px;top:662px;width:1px;height:307px;background:#e3e7e9;"></div>
<div style="left:1332px;top:662px;width:1px;height:307px;background:#e3e7e9;"></div>
<div style="left:1392px;top:662px;width:1px;height:307px;background:#e3e7e9;"></div>
<div style="left:1452px;top:662px;width:1px;height:307px;background:#e3e7e9;"></div>
<div style="left:1513px;top:662px;width:1px;height:307px;background:#e3e7e9;"></div>
<span style="left:479.00px;top:670.31px;font-size:12px;color:#1e1e1e;letter-spacing:-0.164px;">Name</span>
<span style="left:909.00px;top:670.31px;font-size:12px;color:#1e1e1e;letter-spacing:-0.284px;">Address</span>
<span style="left:1338.00px;top:670.31px;font-size:12px;color:#1e1e1e;letter-spacing:-0.056px;">Order</span>
<span style="left:1398.00px;top:670.31px;font-size:12px;color:#1e1e1e;letter-spacing:-0.017px;">Default</span>
<span style="left:1458.00px;top:670.31px;font-size:12px;color:#1e1e1e;letter-spacing:-0.449px;">User</span>
<span style="left:479.00px;top:701.31px;font-size:12px;color:#1c2a4a;letter-spacing:-0.176px;">Amazon</span>
<span style="left:909.00px;top:693.01px;font-size:12px;color:#1c2a4a;letter-spacing:-0.505px;">15 Pearlamn DR</span>
<span style="left:909.00px;top:708.01px;font-size:12px;color:#1c2a4a;letter-spacing:-0.815px;">10977, US</span>
<span style="left:479.00px;top:731.31px;font-size:12px;color:#1c2a4a;letter-spacing:-0.093px;">Iqos store</span>
<span style="left:909.00px;top:723.01px;font-size:12px;color:#1c2a4a;letter-spacing:-0.244px;">3660 Wilshire Blvd</span>
<span style="left:909.00px;top:738.01px;font-size:12px;color:#1c2a4a;letter-spacing:-0.815px;">90010, US</span>
<span style="left:479.00px;top:758.31px;font-size:12px;color:#1c2a4a;letter-spacing:-0.285px;">KateStore</span>
<span style="left:479.00px;top:785.31px;font-size:12px;color:#1c2a4a;letter-spacing:-0.255px;">Kharkiv</span>
<span style="left:909.00px;top:777.01px;font-size:12px;color:#1c2a4a;letter-spacing:-0.358px;">street 123</span>
<span style="left:909.00px;top:792.01px;font-size:12px;color:#1c2a4a;letter-spacing:-0.514px;">KH state, 123456, UK</span>
<span style="left:479.00px;top:815.31px;font-size:12px;color:#1c2a4a;letter-spacing:-0.419px;">Kiev</span>
<span style="left:909.00px;top:807.01px;font-size:12px;color:#1c2a4a;letter-spacing:-0.295px;">street 23 apt. 124</span>
<span style="left:909.00px;top:822.01px;font-size:12px;color:#1c2a4a;letter-spacing:-0.393px;">providence, 123456, UK</span>
<span style="left:479.00px;top:842.31px;font-size:12px;color:#1c2a4a;letter-spacing:0.027px;">ktest-store</span>
<span style="left:909.00px;top:842.31px;font-size:12px;color:#1c2a4a;letter-spacing:-0.557px;">NY, 46356, USA</span>
<span style="left:479.00px;top:866.31px;font-size:12px;color:#1c2a4a;letter-spacing:-0.101px;">New Vendor</span>
<span style="left:479.00px;top:893.31px;font-size:12px;color:#1c2a4a;letter-spacing:-0.773px;">NJ</span>
<span style="left:909.00px;top:885.01px;font-size:12px;color:#1c2a4a;letter-spacing:-0.357px;">60 Saddle River AVE</span>
<span style="left:909.00px;top:900.01px;font-size:12px;color:#1c2a4a;letter-spacing:-0.595px;">NJ, 07606</span>
<span style="left:479.00px;top:923.31px;font-size:12px;color:#1c2a4a;letter-spacing:-0.185px;">Spring Valley</span>
<span style="left:909.00px;top:915.01px;font-size:12px;color:#1c2a4a;letter-spacing:-0.168px;">99 Scott Avenue</span>
<span style="left:909.00px;top:930.01px;font-size:12px;color:#1c2a4a;letter-spacing:-0.710px;">NY, 11237, US</span>
<span style="left:479.00px;top:950.31px;font-size:12px;color:#1c2a4a;letter-spacing:-0.495px;">Store1</span>
<svg style="left:1416px;top:729px;" width="18" height="18" viewBox="0 0 24 24"><circle cx="12" cy="12" r="11.6" fill="#43a047"/><path d="M6.2 12.4l3.9 3.9 7.8-8" stroke="#fff" stroke-width="2.3" fill="none"/></svg>
<div style="left:1700px;top:146px;width:209px;height:57px;border:4px solid #fb594c;box-shadow:2px 2px 2px rgba(0,0,0,.75), inset 2px 2px 2px rgba(0,0,0,.75);"></div>
<div style="left:1382px;top:714px;width:67px;height:43px;border:4px solid #fb594c;box-shadow:2px 2px 2px rgba(0,0,0,.75), inset 2px 2px 2px rgba(0,0,0,.75);"></div>
</body></html>
